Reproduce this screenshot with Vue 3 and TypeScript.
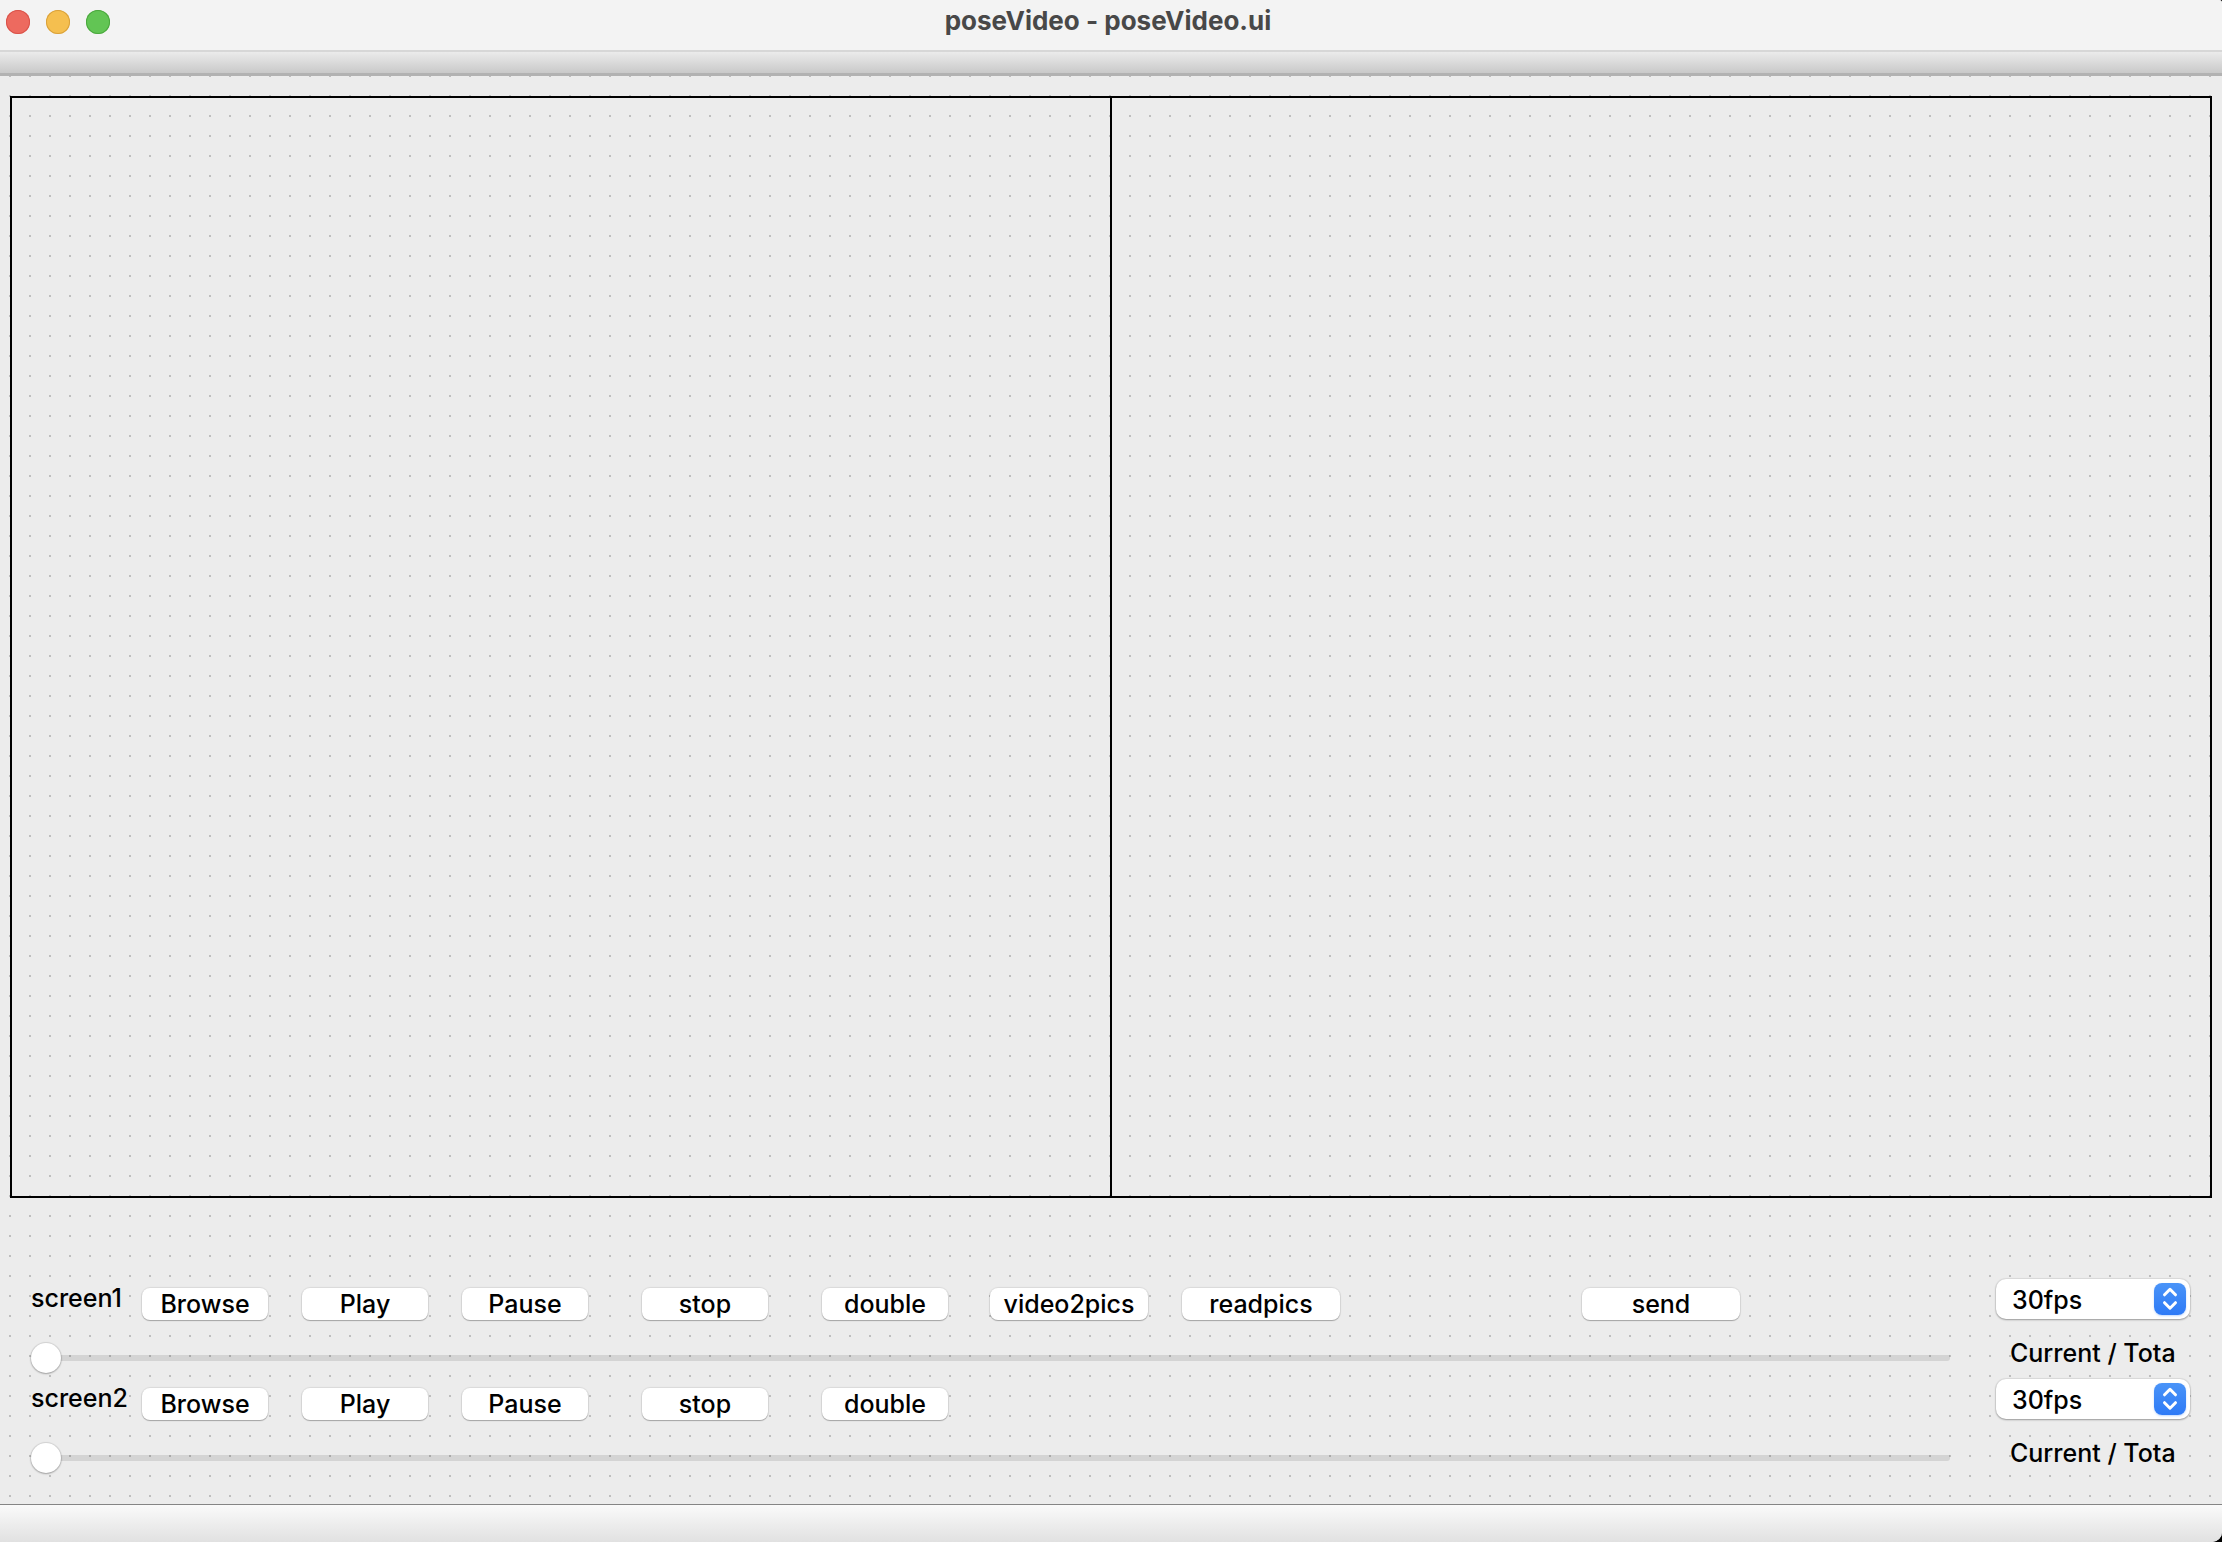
<script setup lang="ts">
import { ref } from 'vue'

interface Channel {
  id: string
  wide: string[]
  send: boolean
  fps: string
  position: number
}

const windowButtons = [
  { name: 'close', label: 'Close' },
  { name: 'minimize', label: 'Minimize' },
  { name: 'zoom', label: 'Zoom' },
]
const transport = ['Browse', 'Play', 'Pause', 'stop', 'double']
const rates = ['30fps', '60fps']

const channels = ref<Channel[]>([
  { id: 'screen1', wide: ['video2pics', 'readpics'], send: true, fps: '30fps', position: 0 },
  { id: 'screen2', wide: [], send: false, fps: '30fps', position: 0 },
])
</script>

<template>
  <div class="window">
    <header class="titlebar">
      <div class="lights">
        <button
          v-for="b in windowButtons"
          :key="b.name"
          type="button"
          class="light"
          :class="b.name"
          :aria-label="b.label"
        ></button>
      </div>
      <h1 class="title">poseVideo - poseVideo.ui</h1>
    </header>
    <div class="toolbar"></div>

    <main class="canvas">
      <div class="screens">
        <div class="screen"></div>
        <div class="screen"></div>
      </div>

      <div class="panel">
        <section v-for="c in channels" :key="c.id" class="channel">
          <div class="controls">
            <label class="name" :for="c.id + '-position'">{{ c.id }}</label>
            <button
              v-for="t in transport"
              :key="t"
              type="button"
              class="push"
              :class="t"
            >{{ t }}</button>
            <button v-for="w in c.wide" :key="w" type="button" class="push wide" :class="w">{{ w }}</button>
            <button v-if="c.send" type="button" class="push wide send">send</button>
          </div>
          <div class="popup">
            <select v-model="c.fps" :aria-label="c.id + ' frame rate'">
              <option v-for="r in rates" :key="r">{{ r }}</option>
            </select>
            <svg class="arrows" viewBox="0 0 32 32" aria-hidden="true">
              <path d="M10.500 11.800 16 6.300l5.500 5.500M10.500 19.700 16 25.200l5.500-5.500" />
            </svg>
          </div>
          <input :id="c.id + '-position'" v-model.number="c.position" class="slider" type="range" min="0" max="99" />
          <span class="time">Current / Tota</span>
        </section>
      </div>
    </main>

    <footer class="statusbar"></footer>
  </div>
</template>

<style>
html {
  background: #000;
}
body {
  margin: 0;
}
</style>

<style scoped>
.window {
  box-sizing: border-box;
  min-height: 100vh;
  display: flex;
  flex-direction: column;
  overflow: hidden;
  border-radius: 0 3px 10px 0;
  background: #ececec;
  color: #000;
  font-family: Inter, 'Liberation Sans', sans-serif;
  font-size: 25px;
  font-weight: 500;
  line-height: 30px;
}
button,
select,
input {
  margin: 0;
  border: 0;
  font: inherit;
  color: inherit;
  box-sizing: border-box;
}
.titlebar {
  height: 50px;
  padding: 0 12px 0 6px;
  display: grid;
  grid-template-columns: 1fr auto 1fr;
  background: #f3f3f3;
}
.lights {
  display: flex;
  gap: 16px;
  padding-top: 10px;
}
.light {
  width: 24px;
  height: 24px;
  padding: 0;
  border-radius: 50%;
}
.close {
  background: #ed6a5f;
  box-shadow: inset 0 0 0 1px #d9534a;
}
.minimize {
  background: #f5bf4f;
  box-shadow: inset 0 0 0 1px #d9a13b;
}
.zoom {
  background: #62c554;
  box-shadow: inset 0 0 0 1px #4ba73e;
}
.title {
  margin: 0;
  padding-top: 6px;
  font-size: 26px;
  font-weight: 700;
  color: #484848;
}
.toolbar {
  box-sizing: border-box;
  height: 26px;
  border-top: 2px solid #d7d7d7;
  border-bottom: 3px solid #b2b2b2;
  background: linear-gradient(#ebebeb, #c9c9c9);
}
.canvas {
  flex: 1;
  display: flex;
  flex-direction: column;
  background: conic-gradient(from 90deg at 2px 2px, transparent 50%, #bebebe 50% 75%, transparent 75%) 9px -1px / 20px 20px #ececec;
}
.screens {
  flex: 1;
  display: flex;
  margin: 20px 10px 0;
  border: 2px solid #000;
  min-height: 300px;
}
.screen {
  flex: 1;
}
.screen + .screen {
  border-left: 2px solid #000;
}
.panel {
  display: flex;
  flex-direction: column;
  gap: 6px;
  padding: 81px 32px 31px 31px;
}
.channel {
  display: grid;
  grid-template-columns: 1fr 194px;
  grid-template-rows: 41px 35px;
  gap: 18px 46px;
}
.controls {
  display: flex;
  align-items: flex-end;
}
.name {
  width: 111px;
  align-self: flex-start;
  padding-top: 4px;
}
.push {
  width: 126px;
  height: 32px;
  padding: 0;
  border-radius: 8px;
  background: #fff;
  box-shadow: 0 0 1px 1px rgba(0, 0, 0, 0.08), 0 1px 1px rgba(0, 0, 0, 0.25);
  line-height: 32px;
  text-align: center;
}
.Play,
.Pause,
.readpics {
  margin-left: 34px;
}
.stop,
.double {
  margin-left: 54px;
}
.video2pics {
  margin-left: 42px;
}
.wide {
  width: 158px;
}
.send {
  margin-left: auto;
  margin-right: 210px;
}
.popup {
  position: relative;
  height: 40px;
}
select {
  appearance: none;
  width: 100%;
  height: 40px;
  padding: 2px 44px 0 16px;
  border-radius: 10px;
  background: #fff;
  box-shadow: 0 0 1px 1px rgba(0, 0, 0, 0.07), 0 1px 2px rgba(0, 0, 0, 0.3);
}
.arrows {
  position: absolute;
  top: 4px;
  right: 4px;
  width: 32px;
  height: 32px;
  border-radius: 8px;
  background: linear-gradient(#4a94f8, #2e7af6);
  box-shadow: 0 1px 2px rgba(46, 122, 246, 0.3);
  pointer-events: none;
}
.arrows path {
  fill: none;
  stroke: #fff;
  stroke-width: 3;
  stroke-linecap: round;
  stroke-linejoin: round;
}
.slider {
  appearance: none;
  align-self: end;
  width: 100%;
  height: 30px;
  padding: 0;
  background: none;
}
.slider::-webkit-slider-runnable-track {
  height: 6px;
  border-radius: 4px 0 4px 4px;
  background: rgba(0, 0, 0, 0.1);
}
.slider::-webkit-slider-thumb {
  appearance: none;
  width: 30px;
  height: 30px;
  margin-top: -12px;
  border-radius: 50%;
  background: #fff;
  box-shadow: 0 0 1px 1px rgba(0, 0, 0, 0.1), 0 1px 2px rgba(0, 0, 0, 0.25);
}
.time {
  margin-left: 14px;
  white-space: nowrap;
}
.statusbar {
  box-sizing: border-box;
  height: 38px;
  border-top: 1px solid #858585;
  background: linear-gradient(#fafafa, #e1e1e1);
}
</style>
